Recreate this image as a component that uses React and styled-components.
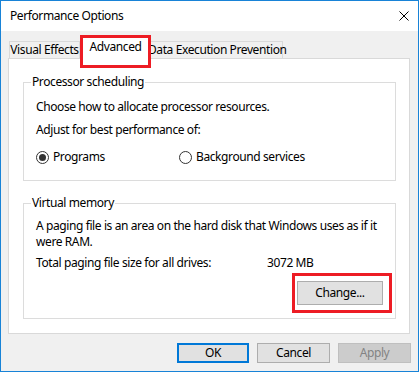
import React from "react";
import styled, { createGlobalStyle } from "styled-components";

const GlobalStyle = createGlobalStyle`
  html, body {
    margin: 0;
    padding: 0;
    background: #ffffff;
  }
  body {
    font-family: "Noto Sans", "DejaVu Sans", sans-serif;
    font-size: 12px;
    letter-spacing: -0.4px;
    color: #000;
  }
  * {
    box-sizing: border-box;
  }
`;

const Window = styled.div`
  width: 419px;
  height: 372px;
  border: 1px solid #1883d7;
  display: flex;
  flex-direction: column;
  background: #f0f0f0;
  overflow: hidden;
`;

const TitleBar = styled.div`
  height: 30px;
  flex: none;
  background: #fff;
  display: flex;
  align-items: center;
  justify-content: space-between;
  padding: 0 9px 0 9px;
  line-height: 16px;
`;

const CloseIcon = styled.svg`
  width: 10px;
  height: 10px;
  display: block;
`;

const Body = styled.div`
  flex: 1;
  display: flex;
  flex-direction: column;
  padding-top: 4px;
`;

const TabStrip = styled.div`
  height: 23px;
  display: flex;
  align-items: flex-start;
  padding-left: 8px;
`;

const Tab = styled.div`
  position: relative;
  width: ${(p) => p.$w}px;
  height: ${(p) => (p.$active ? 33 : 17)}px;
  margin-top: ${(p) => (p.$active ? 0 : 6)}px;
  margin-left: ${(p) => p.$ml || 0}px;
  z-index: ${(p) => (p.$active ? 2 : 0)};
  background: ${(p) => (p.$active ? "#fff" : "#f0f0f0")};
  border: ${(p) => (p.$active ? "3px solid #ed1c24" : "1px solid #d9d9d9")};
  border-bottom: ${(p) => (p.$active ? "3px solid #ed1c24" : "none")};
  text-align: center;
  line-height: 16px;
  padding-top: ${(p) => (p.$active ? 1 : 0)}px;
  white-space: nowrap;
`;

const Panel = styled.div`
  margin: 0 8px 0 7px;
  height: 276px;
  background: #fff;
  border: 1px solid #d9d9d9;
  padding: 15px 13px 0 14px;
  display: flex;
  flex-direction: column;
  gap: 14px;
`;

const Group = styled.fieldset`
  margin: 0;
  border: 1px solid #dcdcdc;
  padding: ${(p) => p.$pad};
  min-width: 0;
  display: flex;
  flex-direction: column;
  align-items: stretch;
`;

const Legend = styled.legend`
  margin-left: -5px;
  padding: 0 1px;
  line-height: 16px;
`;

const Line = styled.div`
  line-height: 16px;
  margin-top: ${(p) => p.$mt || 0}px;
  white-space: nowrap;
`;

const RadioRow = styled.div`
  display: flex;
  margin-top: 11px;
  line-height: 16px;
`;

const RadioItem = styled.label`
  display: flex;
  align-items: center;
  width: ${(p) => p.$w || "auto"};
  gap: 4px;
`;

const RadioCircle = styled.span`
  width: 13px;
  height: 13px;
  border-radius: 50%;
  border: 1px solid #333;
  background: #fff;
  display: flex;
  align-items: center;
  justify-content: center;
  flex: none;
  &::after {
    content: "";
    width: 7px;
    height: 7px;
    border-radius: 50%;
    background: ${(p) => (p.$checked ? "#333" : "transparent")};
  }
`;

const SizeRow = styled.div`
  display: flex;
  line-height: 16px;
  margin-top: 5px;
`;

const SizeLabel = styled.span`
  width: 231px;
  flex: none;
`;

const ChangeRow = styled.div`
  display: flex;
  justify-content: flex-end;
  margin-top: 2px;
`;

const Highlight = styled.div`
  border: 3px solid #ed1c24;
  padding: 5px 6px 5px 2px;
`;

const Button = styled.button`
  font: inherit;
  font-size: 12px;
  letter-spacing: -0.4px;
  color: ${(p) => (p.disabled ? "#838383" : "#000")};
  width: ${(p) => p.$w}px;
  height: ${(p) => p.$h}px;
  background: ${(p) => (p.disabled ? "#cccccc" : "#e1e1e1")};
  border: ${(p) =>
    p.$default ? "2px solid #0078d7" : p.disabled ? "1px solid #bfbfbf" : "1px solid #adadad"};
  border-radius: 0;
  padding: 0;
  line-height: 16px;
  display: flex;
  align-items: center;
  justify-content: center;
`;

const Footer = styled.div`
  display: flex;
  justify-content: flex-end;
  gap: 8px;
  padding: 9px 7px 0 0;
`;

export default function App() {
  return (
    <>
      <GlobalStyle />
      <Window>
        <TitleBar>
          <span>Performance Options</span>
          <CloseIcon viewBox="0 0 10 10">
            <path d="M0.5 0.5 L9.5 9.5 M9.5 0.5 L0.5 9.5" stroke="#000" strokeWidth="1" fill="none" />
          </CloseIcon>
        </TitleBar>
        <Body>
          <TabStrip>
            <Tab $w={71}>Visual Effects</Tab>
            <Tab $w={71} $active>Advanced</Tab>
            <Tab $w={136} $ml={-4}>Data Execution Prevention</Tab>
          </TabStrip>
          <Panel>
            <Group $pad="0 3px 15px 12px">
              <Legend>Processor scheduling</Legend>
              <Line $mt={9}>Choose how to allocate processor resources.</Line>
              <Line $mt={7}>Adjust for best performance of:</Line>
              <RadioRow>
                <RadioItem $w="143px">
                  <RadioCircle $checked />
                  Programs
                </RadioItem>
                <RadioItem>
                  <RadioCircle />
                  Background services
                </RadioItem>
              </RadioRow>
            </Group>
            <Group $pad="0 3px 5px 12px">
              <Legend>Virtual memory</Legend>
              <Line $mt={7}>A paging file is an area on the hard disk that Windows uses as if it</Line>
              <Line>were RAM.</Line>
              <SizeRow>
                <SizeLabel>Total paging file size for all drives:</SizeLabel>
                <span>3072 MB</span>
              </SizeRow>
              <ChangeRow>
                <Highlight>
                  <Button $w={86} $h={24}>Change...</Button>
                </Highlight>
              </ChangeRow>
            </Group>
          </Panel>
          <Footer>
            <Button $w={72} $h={20} $default>OK</Button>
            <Button $w={73} $h={20}>Cancel</Button>
            <Button $w={73} $h={20} disabled>Apply</Button>
          </Footer>
        </Body>
      </Window>
    </>
  );
}
